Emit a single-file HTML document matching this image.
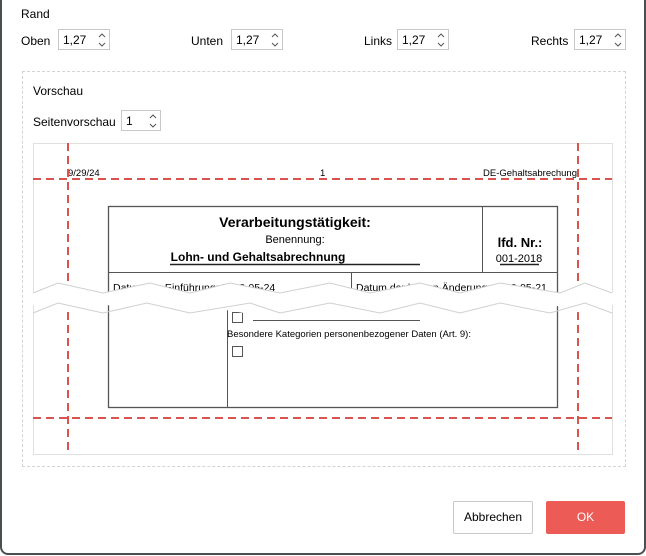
<!DOCTYPE html>
<html><head><meta charset="utf-8"><style>
html,body{margin:0;padding:0;}
body{width:646px;height:556px;position:relative;overflow:hidden;background:#fff;font-family:"Liberation Sans",sans-serif;font-size:12px;color:#000;}
.frame{position:absolute;left:0;top:-10px;width:642px;height:561px;border:2px solid #4a4f52;border-radius:0 0 8px 8px;}
.t{position:absolute;white-space:nowrap;}
.spin{position:absolute;height:21px;border:1px solid #c8c8c8;background:#fff;box-sizing:border-box;}
.spin span{position:absolute;left:4px;top:3px;}
.spin svg{position:absolute;right:3px;top:2px;}
.btn{position:absolute;top:501px;height:33px;box-sizing:border-box;border-radius:2px;text-align:center;line-height:33px;font-size:12px;}
</style></head><body>
<div class="frame"></div>
<div class="t" style="left:21px;top:7px">Rand</div>

<div class="t" style="left:21px;top:34px">Oben</div>
<div class="spin" style="left:58px;top:29px;width:52px"><span>1,27</span><svg width="8" height="16"><path d="M1 5 L4 2 L7 5 M1 11 L4 14 L7 11" fill="none" stroke="#555"/></svg></div>
<div class="t" style="left:191px;top:34px">Unten</div>
<div class="spin" style="left:231px;top:29px;width:52px"><span>1,27</span><svg width="8" height="16"><path d="M1 5 L4 2 L7 5 M1 11 L4 14 L7 11" fill="none" stroke="#555"/></svg></div>
<div class="t" style="left:364px;top:34px">Links</div>
<div class="spin" style="left:397px;top:29px;width:52px"><span>1,27</span><svg width="8" height="16"><path d="M1 5 L4 2 L7 5 M1 11 L4 14 L7 11" fill="none" stroke="#555"/></svg></div>
<div class="t" style="left:531px;top:34px">Rechts</div>
<div class="spin" style="left:574px;top:29px;width:52px"><span>1,27</span><svg width="8" height="16"><path d="M1 5 L4 2 L7 5 M1 11 L4 14 L7 11" fill="none" stroke="#555"/></svg></div>

<div style="position:absolute;left:22px;top:71px;width:602px;height:394px;border:1px dashed #d4d4d4;"></div>
<div class="t" style="left:33px;top:84px">Vorschau</div>
<div class="t" style="left:33px;top:115px">Seitenvorschau</div>
<div class="spin" style="left:121px;top:110px;width:40px"><span>1</span><svg width="8" height="16"><path d="M1 5 L4 2 L7 5 M1 11 L4 14 L7 11" fill="none" stroke="#555"/></svg></div>

<svg style="position:absolute;left:0;top:0" width="646" height="556" font-family="Liberation Sans, sans-serif">
<rect x="33.5" y="143.5" width="579" height="311" fill="#fff" stroke="#e0e0e0"/>
<g fill="#000">
<text x="68" y="176" font-size="9.5">9/29/24</text>
<text x="320" y="176" font-size="9.5">1</text>
<text x="577" y="176" font-size="9.5" text-anchor="end">DE-Gehaltsabrechung</text>
</g>
<g stroke="#555" fill="none">
<rect x="108.5" y="206.5" width="449" height="201" stroke-width="1.3"/>
<line x1="108" y1="272.5" x2="558" y2="272.5"/>
<line x1="482.5" y1="206" x2="482.5" y2="272"/>
<line x1="351.5" y1="272" x2="351.5" y2="290"/>
<line x1="227.5" y1="300" x2="227.5" y2="408"/>
<rect x="232.5" y="312.5" width="10" height="10"/>
<rect x="232.5" y="346.5" width="10" height="10"/>
<line x1="253" y1="320.5" x2="420" y2="320.5"/>
</g>
<g fill="#000">
<text x="295" y="227" font-size="14" font-weight="bold" text-anchor="middle">Verarbeitungstätigkeit:</text>
<text x="295" y="243" font-size="11" text-anchor="middle">Benennung:</text>
<text x="258" y="261" font-size="12" font-weight="bold" text-anchor="middle">Lohn- und Gehaltsabrechnung</text>
<text x="520" y="247" font-size="13" font-weight="bold" text-anchor="middle">lfd. Nr.:</text>
<text x="519" y="262" font-size="11" text-anchor="middle">001-2018</text>
<text x="113" y="291" font-size="10.5">Datum der Einführung: 2018-05-24</text>
<text x="356" y="291" font-size="10.5">Datum der letzten Änderung: 2018-05-21</text>
<text x="227" y="337" font-size="9.5">Besondere Kategorien personenbezogener Daten (Art. 9):</text>
</g>
<line x1="170" y1="264.5" x2="420" y2="264.5" stroke="#222" stroke-width="1.5"/>
<line x1="500" y1="264.5" x2="539" y2="264.5" stroke="#222" stroke-width="1.5"/>
<g stroke="#d9534f" stroke-width="2" stroke-dasharray="8,5">
<line x1="33" y1="179" x2="612" y2="179"/>
<line x1="33" y1="418" x2="612" y2="418"/>
<line x1="68" y1="143" x2="68" y2="454"/>
<line x1="578" y1="143" x2="578" y2="454"/>
</g>
<path d="M30 293 L58 283 L103 293 L150 283 L190 293 L230 283 L280 293 L330 283 L370 293 L420 283 L460 293 L500 283 L560 293 L585 283 L615 293 L615 304 L585 314 L550 304 L500 314 L460 304 L420 314 L380 304 L330 314 L280 304 L250 314 L190 304 L147 314 L103 304 L58 314 L30 304 Z" fill="#fff"/>
<path d="M33 293 L58 283 L103 293 L150 283 L190 293 L230 283 L280 293 L330 283 L370 293 L420 283 L460 293 L500 283 L560 293 L585 283 L612 293" fill="none" stroke="#d0d0d0"/>
<path d="M33 313 L58 303 L103 313 L147 303 L190 313 L250 303 L280 313 L330 303 L380 313 L420 303 L460 313 L500 303 L550 313 L585 303 L612 313" fill="none" stroke="#d0d0d0"/>
</svg>

<div class="btn" style="left:453px;width:80px;border:1px solid #c8c8c8;background:#fff;line-height:31px;">Abbrechen</div>
<div class="btn" style="left:546px;width:79px;background:#ec5b56;color:#fff;">OK</div>
</body></html>
